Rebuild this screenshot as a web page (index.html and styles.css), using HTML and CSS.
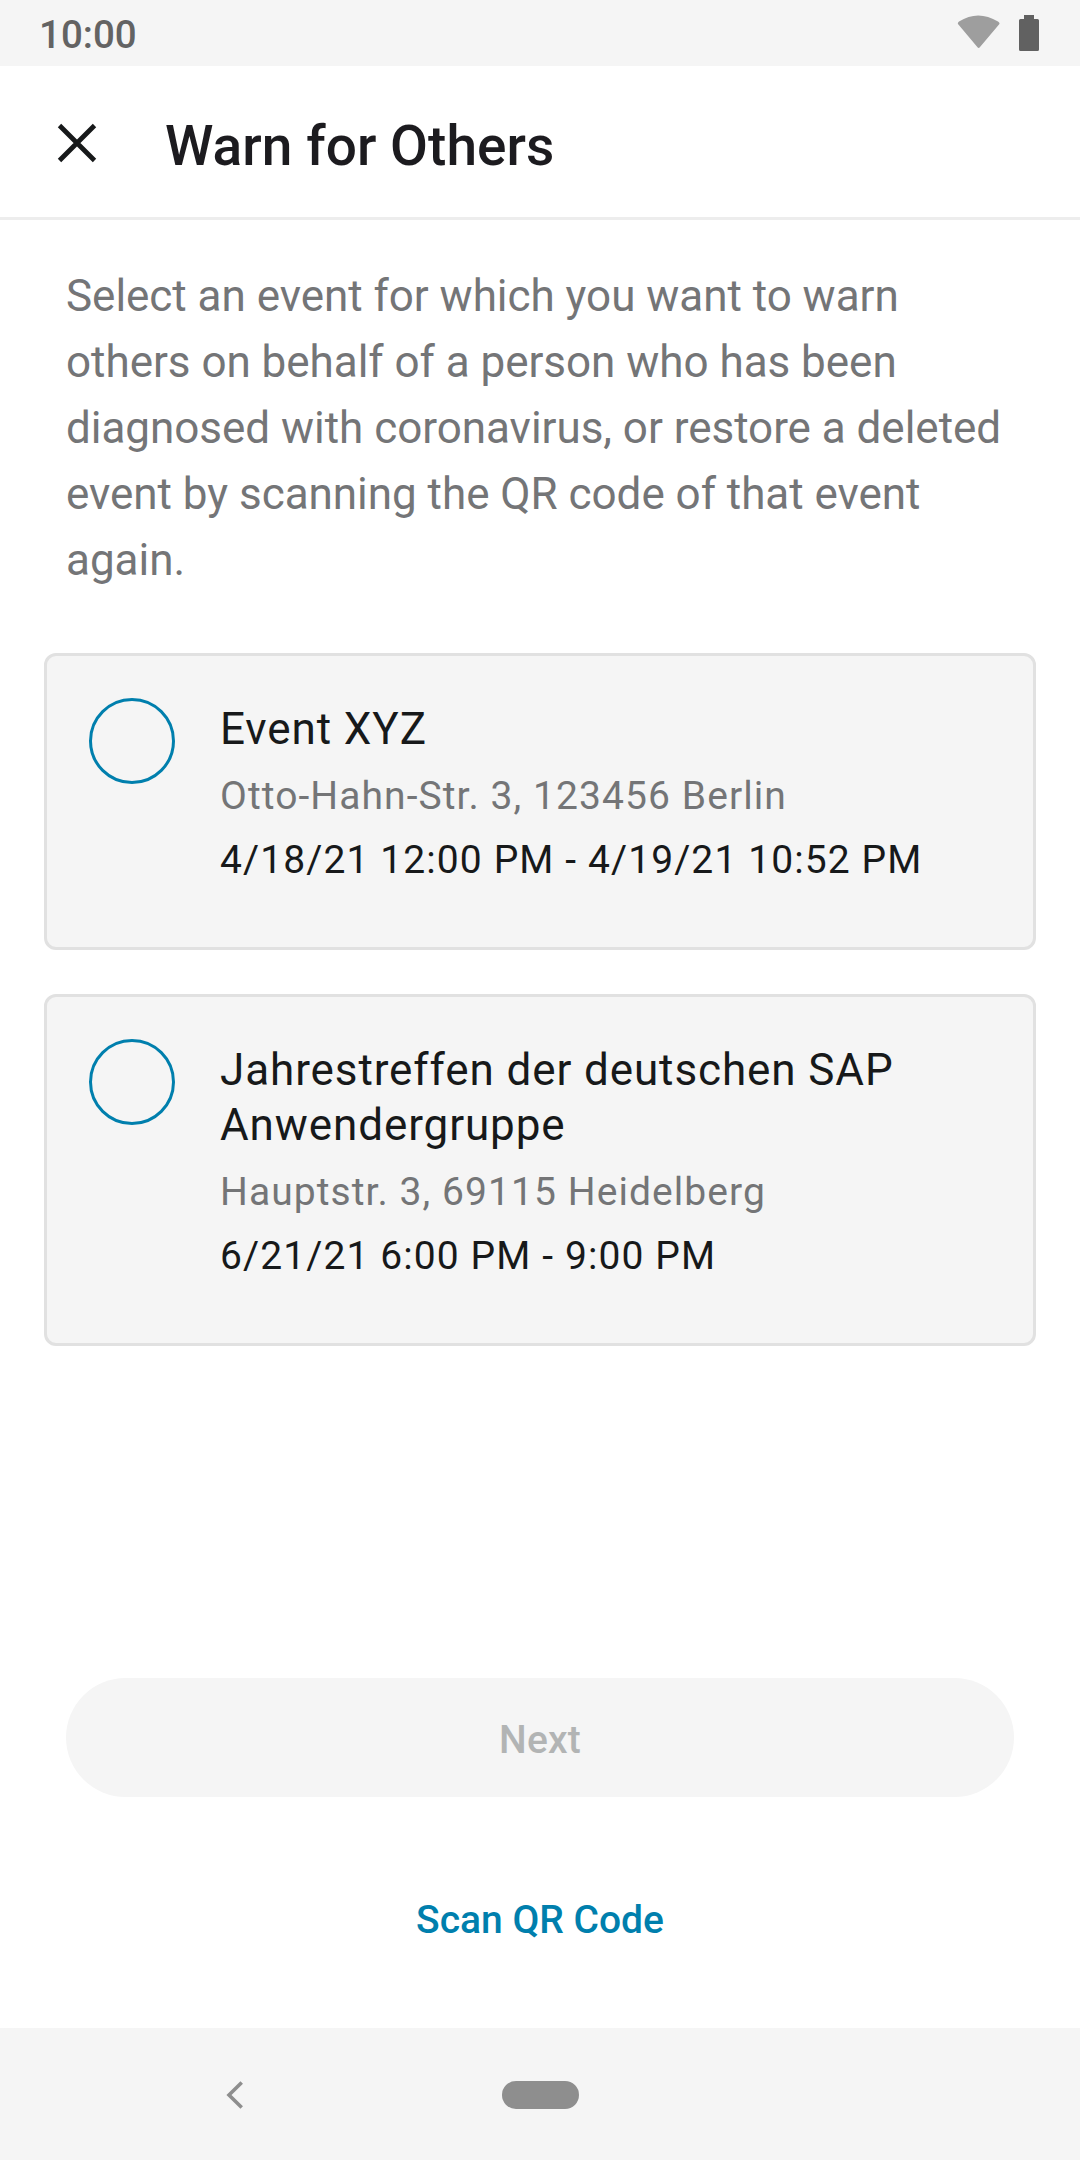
FILE: index.html
```html
<!DOCTYPE html>
<html lang="en">
<head>
<meta charset="utf-8">
<title>Warn for Others</title>
<link rel="stylesheet" href="styles.css">
</head>
<body>
<div class="status">
  <span class="clock">10:00</span>
  <svg class="status-icons" width="84" height="40" viewBox="0 0 84 40"><path d="M1.4 9.6Q0 8 2 6.500Q21-5.500 41 6.500Q43.400 8 42 9.600L23 32Q21.700 34 20.300 32Z" fill="#9e9e9e"/><path d="M67 0h10v4h3.500Q82 4 82 5.500V34.500Q82 36 80.500 36H63.500Q62 36 62 34.500V5.500Q62 4 63.500 4H67Z" fill="#616161"/></svg>
</div>
<header class="toolbar">
  <svg class="close" width="40" height="40" viewBox="0 0 40 40"><path d="M2.500 2.500 37.500 37.500M37.500 2.500 2.500 37.500" stroke="#17191a" stroke-width="4.800"/></svg>
  <h1 class="title">Warn for Others</h1>
</header>
<main class="content">
  <p class="intro">Select an event for which you want to warn others on behalf of a person who has been diagnosed with coronavirus, or restore a deleted event by scanning the QR code of that event again.</p>
  <section class="cards">
    <article class="card">
      <span class="radio"></span>
      <div class="details">
        <h2 class="name">Event XYZ</h2>
        <p class="address">Otto-Hahn-Str. 3, 123456 Berlin</p>
        <p class="time">4/18/21 12:00 PM - 4/19/21 10:52 PM</p>
      </div>
    </article>
    <article class="card">
      <span class="radio"></span>
      <div class="details">
        <h2 class="name">Jahrestreffen der deutschen SAP Anwendergruppe</h2>
        <p class="address">Hauptstr. 3, 69115 Heidelberg</p>
        <p class="time">6/21/21 6:00 PM - 9:00 PM</p>
      </div>
    </article>
  </section>
</main>
<footer class="actions">
  <button class="next" disabled>Next</button>
  <button class="scan">Scan QR Code</button>
</footer>
<nav class="navbar">
  <svg class="back" width="20" height="28" viewBox="0 0 20 28"><path d="M16.700 1.500 4 14l12.700 12.500" fill="none" stroke="#8e8e8e" stroke-width="3.600"/></svg>
  <span class="home"></span>
</nav>
</body>
</html>
```
FILE: styles.css
```css
* { box-sizing: border-box; margin: 0; padding: 0; }
body { width: 1080px; height: 2160px; display: flex; flex-direction: column; background: #fff; color: #17191a; font-family: Roboto, sans-serif; overflow: hidden; }
.status { height: 66px; flex: none; display: flex; justify-content: space-between; padding: 15px 39px 0 39px; background: #f5f5f5; }
.clock { font-size: 38.5px; line-height: 40px; font-weight: 500; color: #636363; }
.toolbar { height: 154px; flex: none; display: flex; align-items: center; padding: 0 57px; border-bottom: 3px solid #ededed; }
.close { margin-top: 2px; }
.title { margin: 8px 0 0 68px; font-size: 55px; line-height: 64px; font-weight: 500; letter-spacing: .05px; color: #1c1b1f; }
.intro { padding: 43px 66px 0; font-size: 44px; line-height: 66px; color: #747577; letter-spacing: -.03px; }
.cards { display: flex; flex-direction: column; gap: 44px; padding: 60px 44px 0; }
.card { display: flex; gap: 44px; padding: 42px 42px 64px; border: 3px solid #e1e1e1; border-radius: 12px; background: #f5f5f5; }
.radio { width: 86px; height: 86px; flex: none; border: 3px solid #007fad; border-radius: 50%; }
.details { padding: 4px 0 0 1px; }
.name { font-size: 44px; line-height: 55px; font-weight: 400; letter-spacing: .9px; }
.address, .time { font-size: 39px; line-height: 46px; letter-spacing: 1.1px; white-space: nowrap; }
.address { margin-top: 16px; color: #747577; letter-spacing: 1.07px; }
.time { margin-top: 18px; }
.actions { margin-top: auto; height: 350px; flex: none; padding: 0 66px; display: flex; flex-direction: column; align-items: center; }
.next, .scan { border: 0; background: none; font: 500 39px/46px Roboto, sans-serif; }
.next { width: 948px; height: 119px; padding-top: 5px; border-radius: 60px; background: #f5f5f5; color: #b2b4b4; letter-spacing: .2px; }
.scan { height: 119px; margin-top: 62px; padding-top: 2px; color: #007fad; }
.navbar { height: 132px; flex: none; display: flex; align-items: center; padding: 1px 225px 0; background: #f5f5f5; }
.home { width: 77px; height: 28px; margin-left: 257px; border-radius: 14px; background: #8e8e8e; }
```
